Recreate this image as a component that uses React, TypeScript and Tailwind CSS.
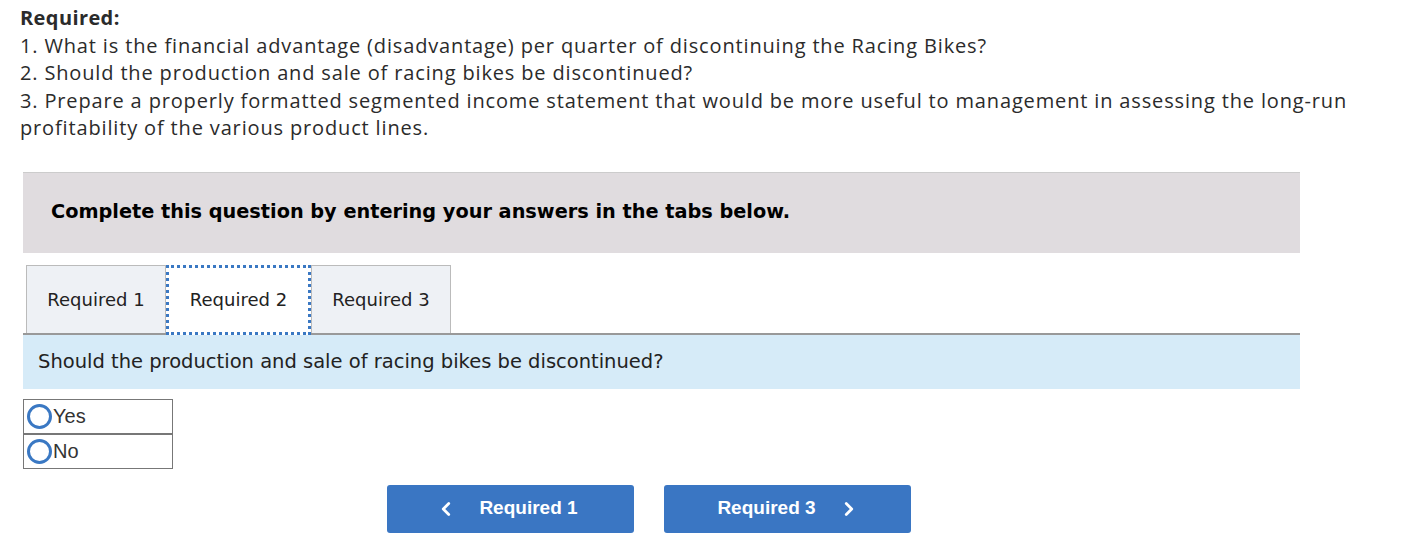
import { ChevronLeft, ChevronRight } from "lucide-react";

const tabs = ["Required 1", "Required 2", "Required 3"];

function Radio({ label }: { label: string }) {
  return (
    <label className="flex h-[35px] w-[150px] items-center border border-[#777] pl-[3px]">
      <span className="h-[25px] w-[25px] rounded-full border-[3px] border-[#3a78c3] bg-white" />
      <span className="ml-[1px] font-['Liberation_Sans',Arial,sans-serif] text-[20px] text-[#333]">
        {label}
      </span>
    </label>
  );
}

export default function App() {
  return (
    <div className="h-[544px] w-[1410px] bg-white pt-[4px] text-[#222]">
      <div className="w-[1395px] pl-[20px] font-['Open_Sans','Noto_Sans',sans-serif] text-[20px] leading-[27.5px] tracking-[0.85px] text-[#2b2b2b]">
        <p className="font-bold tracking-[0.4px]">Required:</p>
        <p>1. What is the financial advantage (disadvantage) per quarter of discontinuing the Racing Bikes?</p>
        <p>2. Should the production and sale of racing bikes be discontinued?</p>
        <p>3. Prepare a properly formatted segmented income statement that would be more useful to management in assessing the long-run profitability of the various product lines.</p>
      </div>

      <div className="ml-[23px] mt-[30px] w-[1277px] font-['DejaVu_Sans',Verdana,sans-serif]">
        <div className="flex h-[81px] items-center border-t border-[#ccc] bg-[#e0dcdf] pl-[28px] text-[19.3px] font-bold text-black">
          Complete this question by entering your answers in the tabs below.
        </div>

        <div className="mt-[12px] flex h-[70px] items-stretch border-b-2 border-[#999] pl-[3px]">
          {tabs.map((t, i) =>
            i === 1 ? (
              <div
                key={t}
                className="relative z-10 -mb-[2px] flex w-[145px] items-center justify-center border-[3px] border-dotted border-[#3a78c3] bg-white text-[18px] text-[#222]"
              >
                {t}
              </div>
            ) : (
              <div
                key={t}
                className="flex w-[140px] items-center justify-center border border-b-0 border-[#bbb] bg-[#eef1f5] text-[18px] text-[#222]"
              >
                {t}
              </div>
            )
          )}
        </div>

        <div className="flex h-[54px] items-center bg-[#d6ebf8] pl-[15px] text-[19.5px] text-[#222]">
          Should the production and sale of racing bikes be discontinued?
        </div>

        <div className="mt-[10px] flex flex-col">
          <Radio label="Yes" />
          <Radio label="No" />
        </div>
      </div>

      <div className="mt-[16px] flex gap-[30px] pl-[387px] font-['Liberation_Sans',Arial,sans-serif]">
        <button className="flex h-[48px] w-[247px] items-center justify-center gap-[22px] rounded-[3px] bg-[#3a76c3] pr-[8px] text-[19px] font-bold text-white">
          <ChevronLeft size={22} strokeWidth={3} />
          Required 1
        </button>
        <button className="flex h-[48px] w-[247px] items-center justify-center gap-[22px] rounded-[3px] bg-[#3a76c3] pl-[2px] text-[19px] font-bold text-white">
          Required 3
          <ChevronRight size={22} strokeWidth={3} />
        </button>
      </div>
    </div>
  );
}
